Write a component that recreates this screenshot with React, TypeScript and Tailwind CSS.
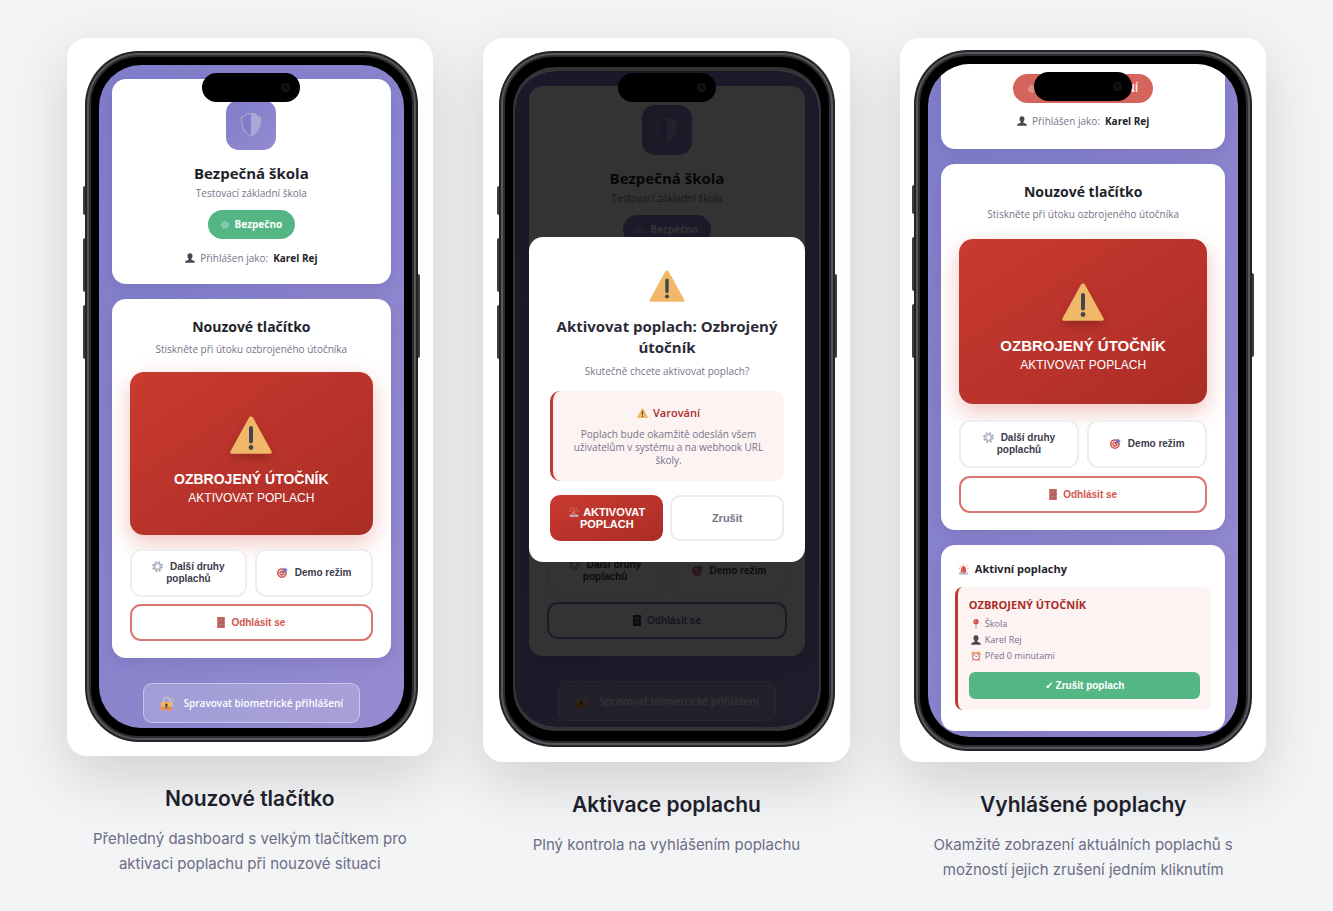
import type { ReactNode } from "react"
import { clsx } from "clsx"

function WarningIcon({ className }: { className?: string }) {
  return (
    <svg viewBox="0 0 42 38" className={className} aria-hidden="true">
      <path d="M21 0.5c0.9 0 1.6 0.5 2.1 1.3l18.4 33.4c0.8 1.4 0 2.6-1.5 2.6H2c-1.5 0-2.3-1.2-1.5-2.6L18.9 1.8C19.4 1 20.1 0.5 21 0.5z" fill="#f2b869" />
      <rect x="19" y="10" width="4" height="17.5" rx="2" fill="#44464f" />
      <circle cx="21" cy="31.5" r="2.4" fill="#44464f" />
    </svg>
  )
}

function ShieldIcon({ className }: { className?: string }) {
  return (
    <svg viewBox="0 0 20 24" className={className} aria-hidden="true">
      <path d="M10 0.8H5.5C5 2.6 3.2 3.8 0.7 4.2c-0.4 8.8 1.8 15.6 9.3 19z" fill="#7f7dca" />
      <path d="M10 0.8h4.5c0.5 1.8 2.3 3 4.8 3.4 0.4 8.8-1.8 15.6-9.3 19z" fill="#aba6dc" />
      <path d="M5.5 0.8h9c0.5 1.8 2.3 3 4.8 3.4 0.4 8.8-1.8 15.6-9.3 19C2.5 19.8 0.3 13 0.7 4.2 3.2 3.8 5 2.6 5.5 0.8z" fill="none" stroke="#b4b3bd" />
    </svg>
  )
}

function UserIcon() {
  return (
    <svg viewBox="0 0 20 20" className="size-[10px] shrink-0" aria-hidden="true">
      <path d="M10 0.5c3.4 0 5.2 2.3 5 5.6-0.2 2.6-1 4.3-2.3 5.5v1.9l5 2c1.5 0.6 2 1.6 2 4H0.3c0-2.4 0.5-3.4 2-4l5-2v-1.9C6 10.4 5.2 8.7 5 6.1 4.8 2.8 6.6 0.5 10 0.5z" fill="#44474f" />
    </svg>
  )
}

function GearIcon() {
  return (
    <svg viewBox="0 0 20 20" className="mr-1 inline size-[11px] align-[-2px]" fill="none" aria-hidden="true">
      <circle cx="10" cy="10" r="8" stroke="#a3a7b8" strokeWidth="3.6" strokeDasharray="3.6 2.68" />
      <circle cx="10" cy="10" r="5.4" stroke="#b3b6c6" strokeWidth="3" />
    </svg>
  )
}

function TargetIcon() {
  return (
    <svg viewBox="0 0 20 20" className="mr-1 inline size-[11px] align-[-2px]" fill="none" aria-hidden="true">
      <circle cx="9" cy="11" r="7.5" fill="#fff" stroke="#d0524a" strokeWidth="2.8" />
      <circle cx="9" cy="11" r="3.6" fill="#f0d9d8" stroke="#d0524a" strokeWidth="2.4" />
      <path d="M9 11l7-7" stroke="#44506b" strokeWidth="1.8" />
      <path d="M11 5.5l4-5 1.5 3 3 1.5-4.5 4.5-4 0.5z" fill="#7476c8" />
    </svg>
  )
}

function DoorIcon({ dimmed }: { dimmed?: boolean }) {
  return (
    <svg viewBox="0 0 14 20" className="mr-[6px] inline h-[11px] w-2 align-[-2px]" aria-hidden="true">
      <rect width="14" height="20" fill={dimmed ? "#333333" : "#d5655c"} />
      <path d="M3.5 3h7v5h-7zM3.5 11h7v6h-7z" fill="#a98580" stroke="#8e4a47" />
      <circle cx="12" cy="10" r="1" fill="#555" />
    </svg>
  )
}

function SirenIcon({ className }: { className?: string }) {
  return (
    <svg viewBox="0 0 20 20" className={className} aria-hidden="true">
      <path d="M10 0.5v3M3.2 2l2 3M16.8 2l-2 3M0.5 7.5l3 1M19.5 7.5l-3 1" stroke="#eda968" strokeWidth="1.6" />
      <path d="M4.5 16l1.3-7.5a4.2 4.2 0 0 1 8.4 0L15.5 16z" fill="#d64f47" />
      <path d="M8.5 14v-4" stroke="#f0a09a" strokeWidth="1.5" />
      <path d="M1.5 15.5h17v4h-17z" fill="#c3c6d3" />
      <path d="M7 15.5h6V18H7z" fill="#9aa0b4" />
    </svg>
  )
}

function LockIcon() {
  return (
    <svg viewBox="0 0 28 28" className="size-[15px] shrink-0" fill="none" aria-hidden="true">
      <path d="M6 13V8.5a6 6 0 0 1 12 0V13" stroke="#c9c4cf" strokeWidth="2.6" />
      <rect x="1.5" y="11" width="21" height="15.5" rx="2" fill="#f2b65e" />
      <path d="M2 20h20v6.5H3z" fill="#e08a55" />
      <circle cx="12" cy="16.5" r="2.5" fill="#44464f" />
      <path d="M12 17v6" stroke="#44464f" strokeWidth="2.4" />
      <circle cx="23" cy="6.5" r="3.3" stroke="#b9b8c4" strokeWidth="2" />
      <path d="M23 10v11M23 15h3M23 19h3" stroke="#b9b8c4" strokeWidth="2" />
    </svg>
  )
}

function PinIcon() {
  return (
    <svg viewBox="0 0 20 20" className="size-[10px] shrink-0" aria-hidden="true">
      <path d="M10 9v11" stroke="#a4a6b0" strokeWidth="1.8" />
      <circle cx="10" cy="5.5" r="5.3" fill="#d4504a" />
      <circle cx="8.3" cy="4" r="1.5" fill="#eda09b" />
    </svg>
  )
}

function AlarmClockIcon() {
  return (
    <svg viewBox="0 0 20 20" className="size-[10px] shrink-0" fill="none" aria-hidden="true">
      <path d="M1.5 6l4-4.5M18.5 6l-4-4.5" stroke="#efaa5a" strokeWidth="3" strokeLinecap="round" />
      <path d="M4.5 16L3 19.5M15.5 16l1.5 3.5" stroke="#c76454" strokeWidth="2" />
      <circle cx="10" cy="11" r="6.8" fill="#fff" stroke="#d8635a" strokeWidth="2.2" />
      <path d="M6.8 8l3.2 3.5 3-2" stroke="#44464f" strokeWidth="1.5" />
    </svg>
  )
}

function PulseDot() {
  return (
    <svg viewBox="0 0 16 16" className="size-2 shrink-0" aria-hidden="true">
      <circle cx="8" cy="8" r="6.5" fill="#ffffff" fillOpacity="0.25" stroke="#ffffff" strokeOpacity="0.6" strokeDasharray="2 2" strokeWidth="2" />
    </svg>
  )
}

function Phone({ dimmed, children }: { dimmed?: boolean; children: ReactNode }) {
  return (
    <div className="relative flex flex-col">
      {/* Hardware keys */}
      <span className="absolute top-[135px] -left-[2px] h-[29px] w-1 rounded-sm bg-[#3c3d43]" />
      <span className="absolute top-[187px] -left-[2px] h-[54px] w-1 rounded-sm bg-[#3c3d43]" />
      <span className="absolute top-[254px] -left-[2px] h-[54px] w-1 rounded-sm bg-[#3c3d43]" />
      <span className="absolute top-[223px] -right-[2px] h-[84px] w-1 rounded-sm bg-[#3c3d43]" />

      <div className="relative rounded-[54px] bg-[#232428] p-[2px]">
        <div className="rounded-[52px] bg-[#56575a] p-[2px]">
          <div
            className={clsx("rounded-[50px] border-2 border-[#2c2d31] bg-black px-2", dimmed ? "py-[10px]" : "py-2")}
          >
            <div
              className={clsx(
                "relative overflow-hidden rounded-[42px] bg-linear-to-br from-[#7f7dca] to-[#958bd0]",
                dimmed && "border-x-2 border-y-4 border-[#333333]"
              )}
            >
              {children}
            </div>
          </div>
        </div>
      </div>

      {/* Dynamic island */}
      <div className="absolute top-[22px] left-1/2 flex h-[29px] w-[98px] -translate-x-1/2 items-center justify-end rounded-full bg-black pr-[10px]">
        <span className="size-[9px] rounded-full border border-[#1d1d28] bg-[#0d0d14]" />
      </div>
    </div>
  )
}

function Panel({ className, children }: { className?: string; children: ReactNode }) {
  return (
    <section className={clsx("rounded-[14px] bg-white shadow-[0_4px_14px_rgba(60,50,120,0.15)]", className)}>
      {children}
    </section>
  )
}

function SignedInAs() {
  return (
    <p className="flex items-center justify-center gap-[5px] text-[10px] leading-[14px] text-[#74748a]">
      <UserIcon />
      Přihlášen jako: <strong className="font-bold text-[#1f1f2b]">Karel Rej</strong>
    </p>
  )
}

function SchoolPanel({ dimmed }: { dimmed?: boolean }) {
  return (
    <Panel className={clsx("flex flex-col items-center pb-[19px]", dimmed ? "pt-[19px]" : "pt-[21px]")}>
      <div className="flex size-[50px] items-center justify-center rounded-[13px] bg-linear-to-br from-[#7f7dca] to-[#958bd0]">
        <ShieldIcon className="h-6 w-5" />
      </div>
      <h2 className="mt-3 text-[15px] leading-[22px] font-bold text-[#1f1f2b]">Bezpečná škola</h2>
      <p className="mt-[2px] text-[10px] leading-[14px] text-[#74748a]">Testovací základní škola</p>
      <div
        className={clsx(
          "mt-[10px] mb-3 flex h-[29px] items-center gap-[6px] rounded-full px-[13px] text-[10px] font-bold text-white",
          dimmed ? "bg-[#8180cb]" : "bg-[#55b685]"
        )}
      >
        <PulseDot />
        Bezpečno
      </div>
      <SignedInAs />
    </Panel>
  )
}

const secondaryButton =
  "h-12 rounded-[11px] border-2 border-[#eceef0] bg-white px-4 text-[10px] leading-3 font-bold text-[#3b3b4c]"

function EmergencyPanel({ dimmed, large }: { dimmed?: boolean; large?: boolean }) {
  return (
    <Panel className="px-[18px] pt-[18px] pb-[17px] text-center">
      {/* The dialog covers the heading and the alarm label, so they stay unpainted behind it */}
      <div className={clsx(dimmed && "invisible")}>
        <h2 className="text-sm leading-[19px] font-bold text-[#1f1f2b]">Nouzové tlačítko</h2>
        <p className="mt-[6px] text-[10px] leading-[14px] whitespace-nowrap text-[#74748a]">
          Stiskněte při útoku ozbrojeného útočníka
        </p>
      </div>
      <div
        className={clsx(
          "grid grid-cols-2 gap-x-2 font-['Liberation_Sans',sans-serif]",
          large ? "mt-[18px] gap-y-2" : "mt-4 gap-y-[7px]"
        )}
      >
        <button
          type="button"
          className={clsx(
            "col-span-2 flex flex-col items-center rounded-[14px] bg-linear-to-br from-[#c93a30] to-[#ab2d26] pt-11 text-white shadow-[0_8px_22px_rgba(201,58,48,0.3)]",
            large ? "mb-2 h-[165px]" : "mb-[7px]",
            !large && (dimmed ? "invisible h-[156px]" : "h-[163px]")
          )}
        >
          <WarningIcon className="h-[38px] w-[42px] drop-shadow-[0_4px_5px_rgba(0,0,0,0.2)]" />
          <span className={clsx("mt-[15px] leading-5 font-bold", large ? "text-[15px]" : "text-sm")}>
            OZBROJENÝ ÚTOČNÍK
          </span>
          <span className="text-xs leading-[18px]">AKTIVOVAT POPLACH</span>
        </button>
        <button type="button" className={secondaryButton}>
          <GearIcon /> Další druhy poplachů
        </button>
        <button type="button" className={secondaryButton}>
          <TargetIcon /> Demo režim
        </button>
        <button
          type="button"
          className={clsx(
            "col-span-2 h-[37px] rounded-[11px] border-2 bg-white text-[10px] leading-3 font-bold",
            dimmed ? "border-[#8180cb] text-[#6a69a8]" : "border-[#da766f] text-[#cf564d]"
          )}
        >
          <DoorIcon dimmed={dimmed} />
          Odhlásit se
        </button>
      </div>
    </Panel>
  )
}

function BiometricButton() {
  return (
    <button
      type="button"
      className="mx-auto mt-[10px] flex h-10 items-center gap-[9px] rounded-[9px] border border-white/40 bg-white/20 px-4 text-[10px] font-semibold whitespace-nowrap text-white"
    >
      <LockIcon />
      Spravovat biometrické přihlášení
    </button>
  )
}

function DashboardScreen({ dimmed }: { dimmed?: boolean }) {
  return (
    <div
      className={clsx("flex flex-col gap-[15px]", dimmed ? "px-[14px] pt-[15px] pb-[6px]" : "px-[13px] pt-[14px] pb-[5px]")}
    >
      <SchoolPanel dimmed={dimmed} />
      <EmergencyPanel dimmed={dimmed} />
      <BiometricButton />
    </div>
  )
}

function ConfirmDialog() {
  return (
    <div className="absolute inset-0 flex items-center bg-black/80 px-[14px]">
      <div
        role="dialog"
        aria-labelledby="confirm-title"
        className="w-full rounded-[14px] bg-white px-[21px] pt-[33px] pb-[21px] text-center"
      >
        <WarningIcon className="mx-auto h-8 w-[36px]" />
        <h2 id="confirm-title" className="mt-[14px] text-[15px] leading-[21px] font-bold text-[#2b2b38]">
          Aktivovat poplach: Ozbrojený útočník
        </h2>
        <p className="mt-[6px] text-[10px] leading-[14px] text-[#74748a]">Skutečně chcete aktivovat poplach?</p>
        <div className="mt-[13px] rounded-[10px] border-l-[3px] border-[#c0392f] bg-[#fdf3f2] px-5 pt-[15px] pb-[14px]">
          <p className="flex items-center justify-center gap-[5px] text-[11px] leading-[14px] font-semibold text-[#a82d27]">
            <WarningIcon className="h-[10px] w-[11px]" />
            Varování
          </p>
          <p className="mt-2 text-[10px] leading-[13px] text-[#74748a]">
            Poplach bude okamžitě odeslán všem uživatelům v systému a na webhook URL školy.
          </p>
        </div>
        <div className="mt-[14px] grid grid-cols-2 gap-[7px] font-['Liberation_Sans',sans-serif] text-[11px] leading-3 font-bold">
          <button
            type="button"
            className="h-[46px] rounded-[10px] bg-linear-to-br from-[#c93a30] to-[#ab2d26] px-3 text-white"
          >
            <SirenIcon className="mr-[2px] inline size-[10px] align-[-1px]" /> AKTIVOVAT POPLACH
          </button>
          <button type="button" className="h-[46px] rounded-[10px] border-2 border-[#ececee] bg-white text-[#74748a]">
            Zrušit
          </button>
        </div>
      </div>
    </div>
  )
}

const alarmDetails = [
  { icon: <PinIcon />, text: "Škola" },
  { icon: <UserIcon />, text: "Karel Rej" },
  { icon: <AlarmClockIcon />, text: "Před 0 minutami" },
]

function AlarmScreen() {
  return (
    <div className="flex flex-col gap-[15px] px-[13px] pb-[6px]">
      <Panel className="rounded-t-none pt-[10px] pb-[21px]">
        <div className="mx-auto mb-[11px] flex h-[29px] w-[140px] items-center justify-between rounded-full bg-[#d5655c] px-[15px] text-[11px] font-semibold whitespace-nowrap text-white">
          <PulseDot />
          Poplach AKTIVNÍ
        </div>
        <SignedInAs />
      </Panel>
      <EmergencyPanel large />
      <Panel className="px-[14px] pt-4 pb-[21px]">
        <h2 className="flex items-center gap-[6px] pl-[3px] text-[11px] leading-4 font-bold text-[#1f1f2b]">
          <SirenIcon className="size-[11px]" />
          Aktivní poplachy
        </h2>
        <article className="mt-[10px] rounded-lg border-l-[3px] border-[#c0392f] bg-[#fdf3f2] px-[11px] pt-[10px] pb-[11px]">
          <h3 className="mb-[3px] text-[11px] leading-4 font-bold text-[#a82d27]">OZBROJENÝ ÚTOČNÍK</h3>
          <ul>
            {alarmDetails.map(({ icon, text }) => (
              <li key={text} className="flex items-center gap-1 pl-[2px] text-[9px] leading-4 text-[#74748a]">
                {icon}
                {text}
              </li>
            ))}
          </ul>
          <button
            type="button"
            className="mt-2 h-[27px] w-full rounded-md bg-[#55b685] font-['Liberation_Sans',sans-serif] text-[10px] font-bold text-white"
          >
            ✓ Zrušit poplach
          </button>
        </article>
      </Panel>
    </div>
  )
}

const features = [
  {
    title: "Nouzové tlačítko",
    text: "Přehledný dashboard s velkým tlačítkem pro aktivaci poplachu při nouzové situaci",
    padding: "pt-[13px] pb-[14px] pl-[18px] pr-[15px]",
    screen: <Phone><DashboardScreen /></Phone>,
  },
  {
    title: "Aktivace poplachu",
    text: "Plný kontrola na vyhlášením poplachu",
    padding: "pt-[13px] pb-[15px] pl-4 pr-[15px]",
    screen: (
      <Phone dimmed>
        <DashboardScreen dimmed />
        <ConfirmDialog />
      </Phone>
    ),
  },
  {
    title: "Vyhlášené poplachy",
    text: "Okamžité zobrazení aktuálních poplachů s možností jejich zrušení jedním kliknutím",
    padding: "pt-3 pb-[11px] px-[14px]",
    screen: <Phone><AlarmScreen /></Phone>,
  },
]

export default function App() {
  return (
    <main className="min-h-screen bg-[#f3f4f6] px-4 pt-[38px] pb-8 font-['Open_Sans',sans-serif]">
      <div className="mx-auto grid max-w-[1200px] items-start gap-[50px] md:grid-cols-3">
        {features.map(({ title, text, padding, screen }) => (
          <figure key={title}>
            <div className={clsx("rounded-[20px] bg-white shadow-[0_20px_60px_rgba(0,0,0,0.15)]", padding)}>
              {screen}
            </div>
            <figcaption className="relative mt-[30px] text-center font-['Inter',sans-serif]">
              <h3 className="text-[21px] leading-[25px] font-semibold text-[#1f1f2b]">{title}</h3>
              <p className="mt-[15px] px-5 text-[15px] leading-[25px] text-[#6c6c85]">{text}</p>
            </figcaption>
          </figure>
        ))}
      </div>
    </main>
  )
}
